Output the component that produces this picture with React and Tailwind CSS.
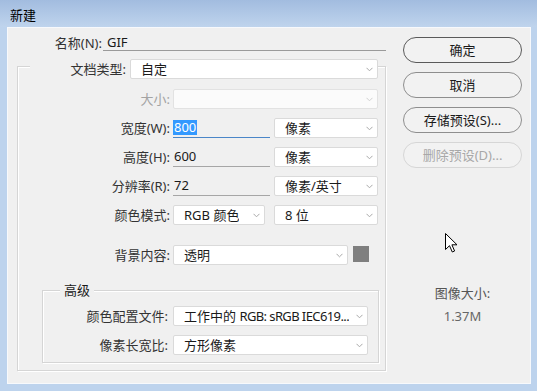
import React from "react";

function Chevron({ color = "#a9a9a9" }) {
  return (
    <svg width="7" height="5" viewBox="0 0 7 5" className="shrink-0">
      <path d="M0.5 0.8 L3.5 3.8 L6.5 0.8" fill="none" stroke={color} strokeWidth="1" />
    </svg>
  );
}

function Select({ className = "", children, disabled }) {
  return (
    <div
      className={`flex h-[20px] shrink-0 items-center justify-between rounded-[2px] border pl-[10px] pr-[4px] ${
        disabled ? "border-[#e2e2e2] bg-[#fbfbfb]" : "border-[#dadada] bg-white"
      } ${className}`}
    >
      <span className="overflow-hidden whitespace-nowrap leading-[18px] text-[#1a1a1a]">{children}</span>
      <Chevron color={disabled ? "#d0d0d0" : "#a9a9a9"} />
    </div>
  );
}

function Cursor() {
  return (
    <svg width="13" height="20" viewBox="0 0 13 20" className="absolute left-[437px] top-[205px]">
      <path
        d="M0.5 0.5 L0.5 16.5 L4.5 12.7 L7.3 19 L9.6 18 L6.9 11.8 L12 11.8 Z"
        fill="#fff"
        stroke="#000"
        strokeWidth="1"
        strokeLinejoin="miter"
      />
    </svg>
  );
}

function Button({ children, tone = "normal" }) {
  const cls =
    tone === "default"
      ? "border-[#5a5a5a] text-[#1a1a1a]"
      : tone === "disabled"
      ? "border-[#d6d6d6] text-[#a8a8a8]"
      : "border-[#8e8e8e] text-[#1a1a1a]";
  return (
    <div
      className={`flex h-[26px] w-[119px] items-center justify-center rounded-full border bg-[#f2f2f2] leading-[18px] ${cls}`}
    >
      {children}
    </div>
  );
}

export default function App() {
  return (
    <div className="flex h-[391px] w-[537px] flex-col bg-[#bdd3ed] font-['Noto_Sans','Noto_Sans_CJK_SC',sans-serif] text-[13px] text-[#333]">
      {/* title bar */}
      <div className="h-[27px] shrink-0 bg-gradient-to-b from-[#a2bcdf] to-[#bfd4ed] pl-[10px] pt-[7px] leading-[16px] text-[13px] text-black">
        新建
      </div>

      {/* dialog body */}
      <div className="relative mb-[7px] ml-[7px] mr-[6px] flex h-[357px] border border-[#f7f9fc] bg-[#f0f0f0]">
        {/* left pane */}
        <div className="w-[378px] shrink-0 pt-[7px]">
          {/* name row */}
          <div className="flex h-[16px] items-center">
            <div className="w-[95px] shrink-0 pr-[1px] text-right leading-[16px]">名称(N):</div>
            <div className="flex h-[16px] w-[286px] items-center border-b border-[#9a9a9a] pl-[4px] leading-[15px] text-[#1a1a1a]">
              GIF
            </div>
          </div>

          {/* outer group */}
          <div className="ml-[9px] mt-[15px] w-[369px] border border-[#d5d5d5] pb-[7px] shadow-[inset_1px_1px_0_#fff,1px_1px_0_#fff]">
            {/* legend row: document type */}
            <div className="-mt-[8px] ml-[12px] flex w-fit items-center bg-[#f0f0f0]">
              <div className="w-[96px] shrink-0 text-right leading-[18px]">文档类型:</div>
              <Select className="ml-[4px] w-[248px]">自定</Select>
            </div>

            {/* size */}
            <div className="mt-[10px] flex items-center">
              <div className="w-[152px] shrink-0 text-right leading-[18px] text-[#a3a3a3]">大小:</div>
              <Select className="ml-[3px] w-[205px]" disabled>
                {" "}
              </Select>
            </div>

            {/* width */}
            <div className="mt-[9px] flex items-center">
              <div className="w-[152px] shrink-0 text-right leading-[18px]">宽度(W):</div>
              <div className="ml-[3px] flex h-[20px] w-[97px] shrink-0 items-center border-b border-[#4a86c8]">
                <span className="bg-[#3399ff] px-[1px] leading-[15px] text-white">800</span>
              </div>
              <Select className="ml-[4px] w-[104px]">像素</Select>
            </div>

            {/* height */}
            <div className="mt-[9px] flex items-center">
              <div className="w-[152px] shrink-0 text-right leading-[18px]">高度(H):</div>
              <div className="ml-[3px] flex h-[20px] w-[97px] shrink-0 items-center border-b border-[#a6a6a6] pl-[1px] leading-[15px] text-[#1a1a1a]">
                600
              </div>
              <Select className="ml-[4px] w-[104px]">像素</Select>
            </div>

            {/* resolution */}
            <div className="mt-[9px] flex items-center">
              <div className="w-[152px] shrink-0 text-right leading-[18px]">分辨率(R):</div>
              <div className="ml-[3px] flex h-[20px] w-[97px] shrink-0 items-center border-b border-[#a6a6a6] pl-[1px] leading-[15px] text-[#1a1a1a]">
                72
              </div>
              <Select className="ml-[4px] w-[104px]">像素/英寸</Select>
            </div>

            {/* color mode */}
            <div className="mt-[9px] flex items-center">
              <div className="w-[152px] shrink-0 text-right leading-[18px]">颜色模式:</div>
              <Select className="ml-[3px] w-[92px]">RGB 颜色</Select>
              <Select className="ml-[9px] w-[104px]">8 位</Select>
            </div>

            {/* background */}
            <div className="mt-[20px] flex items-start">
              <div className="w-[152px] shrink-0 text-right leading-[20px]">背景内容:</div>
              <Select className="ml-[3px] w-[175px]">透明</Select>
              <div className="ml-[5px] mt-[1px] h-[16px] w-[16px] shrink-0 bg-[#7f7f7f]" />
            </div>

            {/* advanced group */}
            <div className="ml-[24px] mt-[25px] w-[337px] border border-[#d5d5d5] pb-[7px] shadow-[inset_1px_1px_0_#fff,1px_1px_0_#fff]">
              <div className="-mt-[10px] ml-[17px] w-fit bg-[#f0f0f0] px-[4px] leading-[18px] text-[#1a1a1a]">
                高级
              </div>
              <div className="mt-[7px] flex items-center">
                <div className="w-[125px] shrink-0 text-right leading-[18px]">颜色配置文件:</div>
                <Select className="ml-[5px] w-[195px]">
                  工作中的 <span className="tracking-[-0.6px]">RGB: sRGB IEC619...</span>
                </Select>
              </div>
              <div className="mt-[9px] flex items-center">
                <div className="w-[125px] shrink-0 text-right leading-[18px]">像素长宽比:</div>
                <Select className="ml-[5px] w-[195px]">方形像素</Select>
              </div>
            </div>
          </div>
        </div>

        {/* right pane */}
        <div className="flex w-[144px] shrink-0 flex-col pl-[17px] pt-[9px]">
          <div className="flex flex-col gap-[9px]">
            <Button tone="default">确定</Button>
            <Button>取消</Button>
            <Button>存储预设(S)...</Button>
            <Button tone="disabled">删除预设(D)...</Button>
          </div>
          <div className="mt-[117px] w-[119px] text-center leading-[16px] text-[#555]">图像大小:</div>
          <div className="mt-[7px] w-[119px] text-center leading-[16px] text-[#666]">1.37M</div>
        </div>

        <Cursor />
      </div>
    </div>
  );
}
